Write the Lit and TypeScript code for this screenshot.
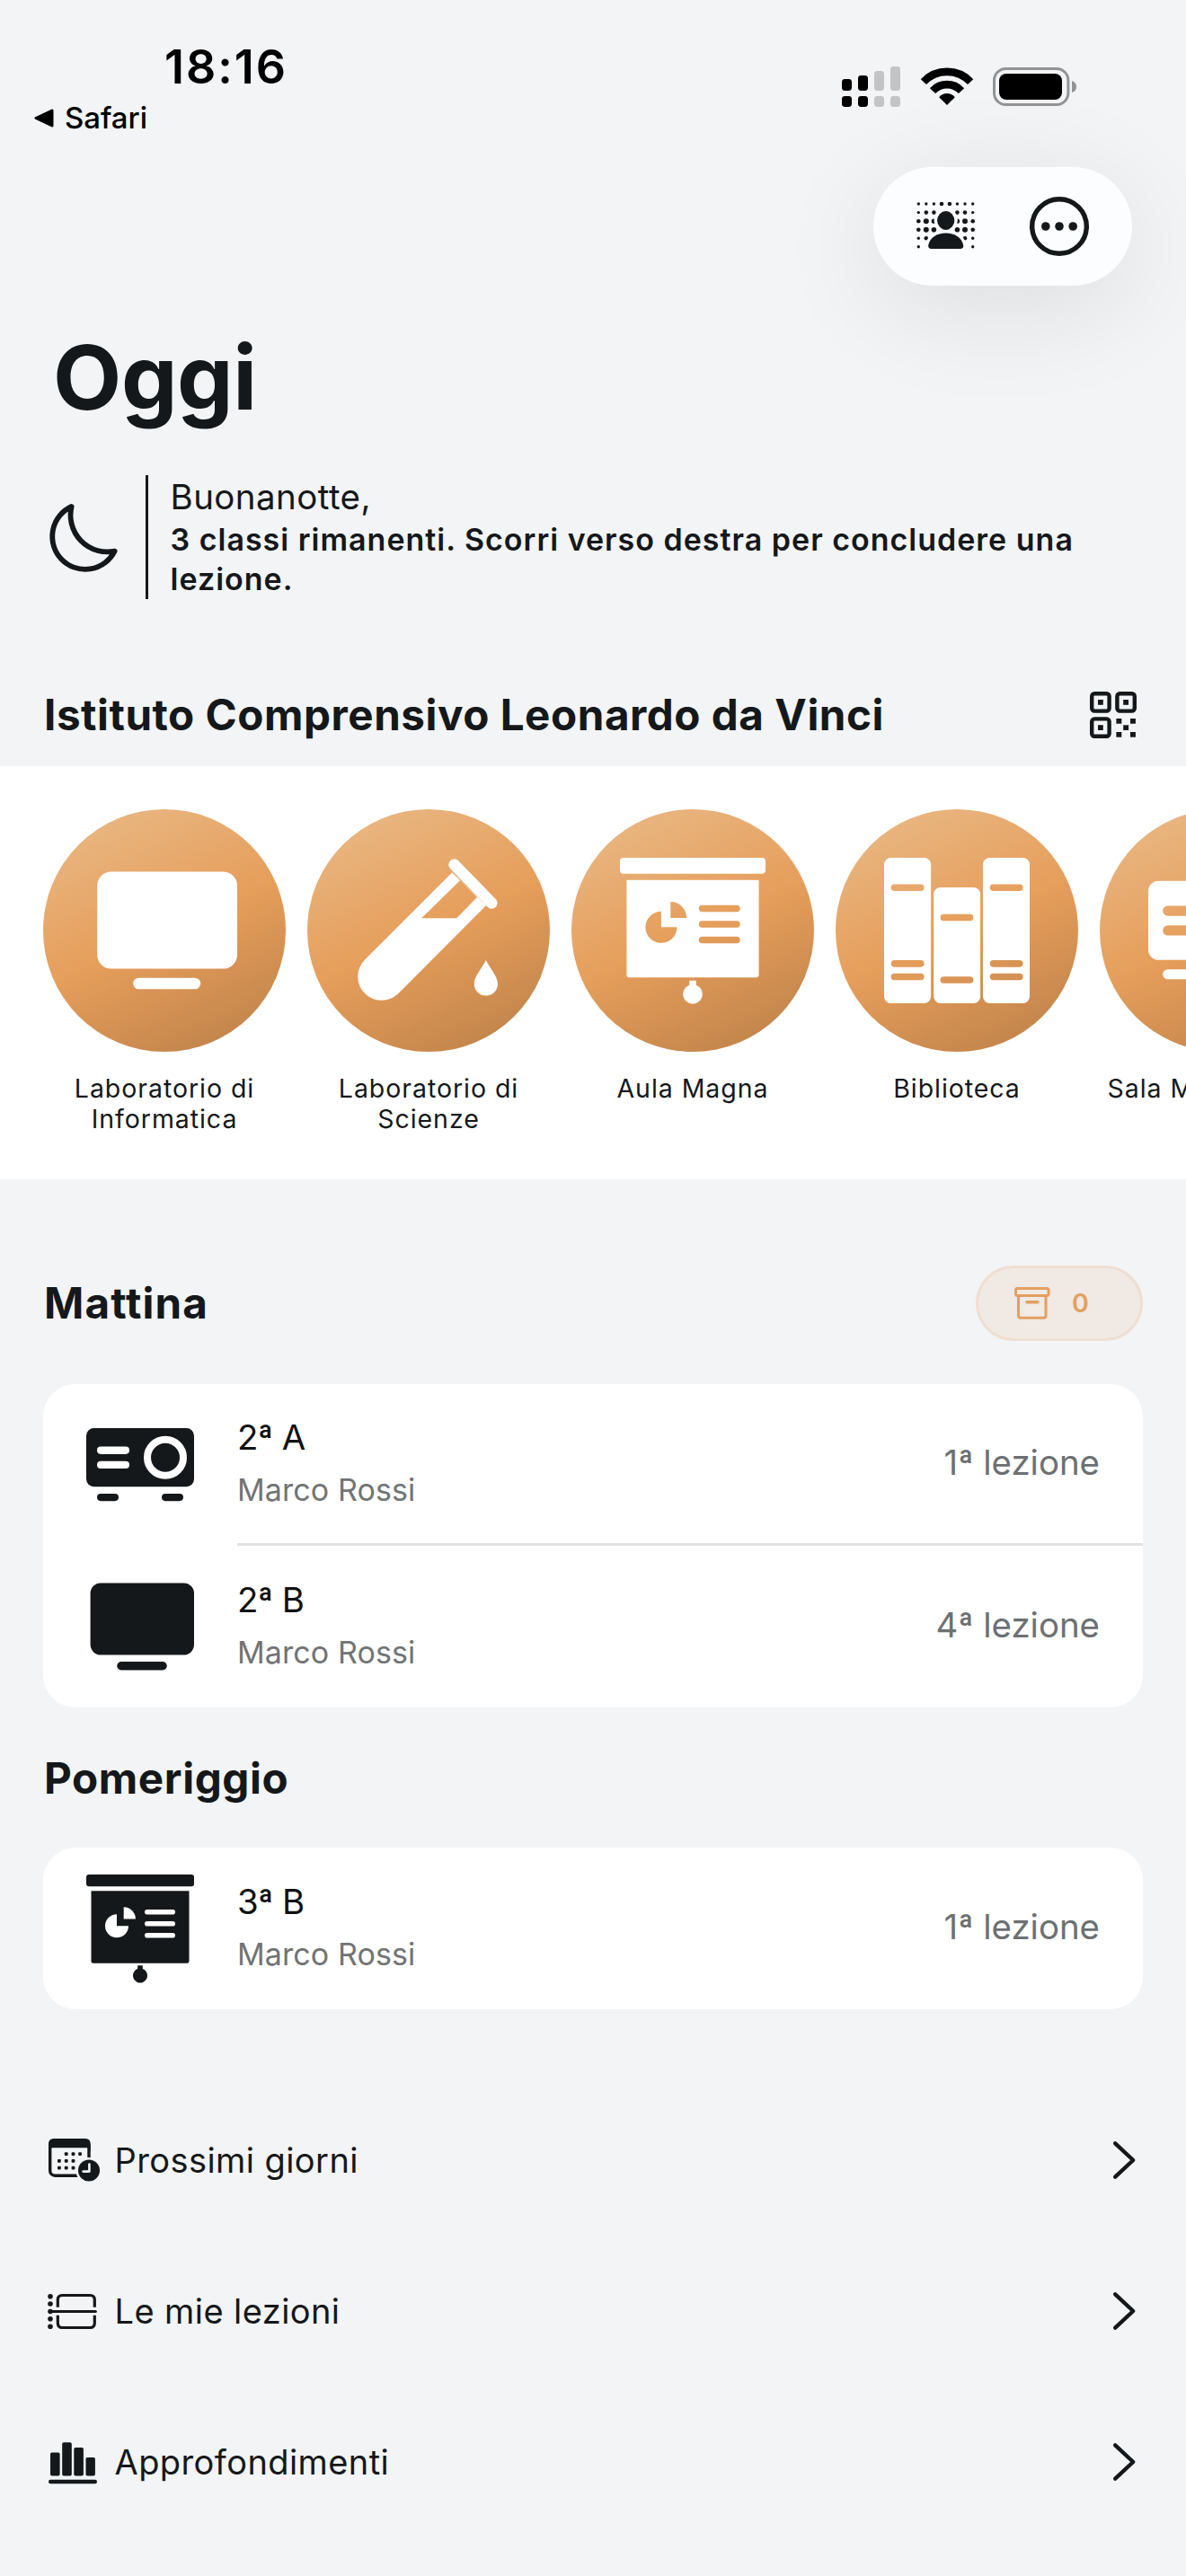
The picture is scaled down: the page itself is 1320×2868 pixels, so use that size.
import { LitElement, html, css, svg, nothing, type TemplateResult } from "lit";
import { customElement, property } from "lit/decorators.js";

type IconName = "monitor" | "tube" | "screen" | "books" | "projector";

/* Glyphs drawn on a 120-unit square; "cut" shapes are punched out with a mask. */
const ICONS: Record<IconName, { body: TemplateResult; cut?: TemplateResult }> = {
  monitor: {
    body: svg`<rect x="4.6" y="11.5" width="115.4" height="80" rx="11.5"/><rect x="34.2" y="99" width="55.6" height="9.4" rx="4.7"/>`,
  },
  projector: {
    body: svg`<rect x="0" y="19" width="120" height="65.3" rx="8.5"/><rect x="12" y="92" width="24" height="8.2" rx="4.1"/><rect x="84" y="92" width="24" height="8.2" rx="4.1"/>`,
    cut: svg`<rect x="12" y="39.6" width="36" height="8.3" rx="4.1"/><rect x="12" y="55.8" width="36" height="8.3" rx="4.1"/><circle cx="88" cy="51.7" r="20" fill="none" stroke="#000" stroke-width="8"/>`,
  },
  screen: {
    body: svg`<rect x="0" y="0" width="120" height="13.2" rx="3"/><path d="M5.5 18.3H114.5V96.5Q114.5 98.7 112.3 98.7H7.7Q5.5 98.7 5.5 96.5Z"/><path d="M57.2 101.3H62.8V105A8 8 0 1 1 57.2 105Z"/>`,
    cut: svg`<path d="M34 44.3A13 13 0 1 0 47 57.3H34Z"/><path d="M41.7 36.3A13.2 13.2 0 0 1 54.9 49.6H41.7Z"/><rect x="65" y="39" width="34" height="5.6" rx="2.8"/><rect x="65" y="52" width="34" height="5.6" rx="2.8"/><rect x="65" y="65" width="34" height="5.6" rx="2.8"/>`,
  },
  books: {
    body: svg`<rect x="0" y="0" width="38.6" height="120" rx="5.5"/><rect x="40.9" y="24.5" width="38.4" height="95.5" rx="5.5"/><rect x="81.5" y="0" width="38.5" height="120" rx="5.5"/>`,
    cut: svg`${[[5.7, 21.8], [5.7, 84.5], [5.7, 95.4], [46.3, 46.4], [46.3, 97.9], [87.2, 21.8], [87.2, 84.5], [87.2, 95.4]].map(
      ([x, y]) => svg`<rect x=${x} y=${y} width="27.3" height="5.6" rx="2.8"/>`
    )}`,
  },
  tube: {
    body: svg`<path d="M6.9 84.7L79.4 12.2L107.5 39.3L34.6 112.4A19.6 19.6 0 0 1 6.9 84.7Z"/><path d="M81.2 5.7L112 37.3" stroke="#fff" stroke-width="9.4" stroke-linecap="round"/><path d="M107.3 84.5C110.2 91 117 97.5 117 104A9.7 9.7 0 0 1 97.6 104C97.6 97.5 104.4 91 107.3 84.5Z"/>`,
    cut: svg`<path d="M86.1 18.5L100 32.6L83 49.9H54.1Z"/>`,
  },
};

@customElement("room-icon")
export class RoomIcon extends LitElement {
  static styles = css`
    :host { display: block; }
    .glyph { display: block; width: 100%; height: 100%; overflow: visible; }
  `;
  @property() name: IconName = "monitor";
  render() {
    const { body, cut } = ICONS[this.name];
    return html`<svg class="glyph" viewBox="0 0 120 120">
      <mask id="m" maskUnits="userSpaceOnUse" x="-5" y="-5" width="130" height="130">
        <g fill="#fff">${body}</g>
        ${cut ? svg`<g fill="#000">${cut}</g>` : nothing}
      </mask>
      <rect x="-5" y="-5" width="130" height="130" fill="currentColor" mask="url(#m)" />
    </svg>`;
  }
}

const ROOMS: { icon: IconName; label: string }[] = [
  { icon: "monitor", label: "Laboratorio di Informatica" },
  { icon: "tube", label: "Laboratorio di Scienze" },
  { icon: "screen", label: "Aula Magna" },
  { icon: "books", label: "Biblioteca" },
  { icon: "projector", label: "Sala Multimediale" },
];

interface Lesson { icon: IconName; name: string; teacher: string; slot: string }
const MORNING: Lesson[] = [
  { icon: "projector", name: "2ª A", teacher: "Marco Rossi", slot: "1ª lezione" },
  { icon: "monitor", name: "2ª B", teacher: "Marco Rossi", slot: "4ª lezione" },
];
const AFTERNOON: Lesson[] = [
  { icon: "screen", name: "3ª B", teacher: "Marco Rossi", slot: "1ª lezione" },
];

/* x, y, radius of the halftone dots behind the portrait */
const DOTS: [number, number, number][] = (() => {
  const cols = [2.3, 10.8, 19.4, 28, 36.9, 45.4, 54, 62.7];
  const rows = [2, 11.6, 21.2, 30.8, 40.3, 49.8];
  const radii = [
    [1.7, 1.7, 1.7, 2.3, 2.3, 1.7, 1.7, 1.7],
    [1.7, 2.3, 2.3, 0, 0, 2.3, 2.3, 1.7],
    [2.3, 3, 2.7, 0, 0, 2.7, 3, 2.3],
    [2.3, 3, 2.8, 0, 0, 2.8, 3, 2.3],
    [1.7, 2.3, 0, 0, 0, 0, 2.3, 1.7],
    [1.7, 0, 0, 0, 0, 0, 0, 1.7],
  ];
  const out: [number, number, number][] = [];
  radii.forEach((line, r) => line.forEach((v, c) => v && out.push([cols[c], rows[r], v])));
  return out;
})();

const faceIcon = html`<svg class="face" viewBox="0 0 65 54">
  <g fill="currentColor">${DOTS.map(([x, y, r]) => svg`<circle cx=${x} cy=${y} r=${r} />`)}</g>
  <ellipse cx="32.7" cy="20.5" rx="13" ry="14" fill="#fcfdfe" />
  <path d="M9.6 54C8 40 20 30.8 32.7 30.8S57 40 55.8 54Z" fill="#fcfdfe" />
  <ellipse cx="32.7" cy="20.5" rx="9.6" ry="10.4" fill="currentColor" />
  <path d="M16.6 52Q13 52 13.2 48.2C14.5 39.5 23 34.4 32.7 34.4S50.8 39.5 52.2 48.2Q52.4 52 48.8 52Z" fill="currentColor" />
</svg>`;

const moreIcon = html`<svg class="more" viewBox="0 0 66 66">
  <circle cx="33" cy="33" r="30.3" fill="none" stroke="currentColor" stroke-width="5.4" />
  <g fill="currentColor"><circle cx="17.8" cy="33" r="4.8" /><circle cx="33" cy="33" r="4.8" /><circle cx="48.2" cy="33" r="4.8" /></g>
</svg>`;

const signalIcon = html`<svg class="signal" viewBox="0 0 66 46">
  <g fill="#000"><rect x="0" y="14" width="11" height="13" rx="3.4" /><rect x="18" y="10" width="11" height="17" rx="3.4" /><rect x="0" y="33" width="11" height="12" rx="3.4" /><rect x="18" y="33" width="11" height="12" rx="3.4" /></g>
  <g fill="#c3c4c6"><rect x="36" y="5" width="11" height="22" rx="3.4" /><rect x="54" y="0" width="11" height="27" rx="3.4" /><rect x="36" y="33" width="11" height="12" rx="3.4" /><rect x="54" y="33" width="11" height="12" rx="3.4" /></g>
</svg>`;

const wifiIcon = html`<svg class="wifi" viewBox="0 0 58 42">
  <g fill="none" stroke="#000" stroke-width="8.6"><path d="M2.9 16.1A36 36 0 0 1 55.1 16.1" /><path d="M13 26.1A21.8 21.8 0 0 1 45 26.1" /></g>
  <path d="M20.2 33.2Q24 29 29 29T37.8 33.2L29 42Z" fill="#000" />
</svg>`;

const batteryIcon = html`<svg class="battery" viewBox="0 0 94 43">
  <rect x="1.5" y="1.5" width="82.4" height="40" rx="13" fill="none" stroke="#939396" stroke-width="3" />
  <rect x="7" y="7" width="70" height="29" rx="8" fill="#000" />
  <path d="M88 15Q93 16.5 93 21.5T88 28Z" fill="#939396" />
</svg>`;

const moonIcon = html`<svg class="moon" viewBox="0 0 77 77">
  <path d="M25.6 4A36.600 36.600 0 1 0 73.600 53.600A41 41 0 0 1 25.600 4Z" fill="none" stroke="currentColor" stroke-width="5.800" stroke-linejoin="round" />
</svg>`;

const qrIcon = html`<svg class="qr" viewBox="0 0 52 52">
  <g fill="none" stroke="currentColor" stroke-width="4.4"><rect x="2.2" y="2.2" width="19.4" height="19.4" rx="3" /><rect x="30.4" y="2.2" width="19.4" height="19.4" rx="3" /><rect x="2.2" y="30.4" width="19.4" height="19.4" rx="3" /></g>
  <g fill="currentColor"><rect x="9" y="9" width="5.8" height="5.8" /><rect x="37.2" y="9" width="5.8" height="5.8" /><rect x="9" y="37.2" width="5.8" height="5.8" /><rect x="29.4" y="30" width="5.9" height="5.7" /><rect x="45" y="30" width="5.9" height="5.7" /><rect x="37.2" y="37.3" width="5.9" height="5.7" /><rect x="29.4" y="45" width="5.9" height="5.7" /><rect x="45" y="45" width="5.9" height="5.7" /></g>
</svg>`;

const archiveIcon = html`<svg class="archive" viewBox="0 0 40 36">
  <g fill="none" stroke="currentColor" stroke-width="3" stroke-linejoin="round"><rect x="1.5" y="1.5" width="36.5" height="8" rx="2" /><path d="M4.5 9.5V31.5Q4.5 34.3 7.3 34.3H32.2Q35 34.3 35 31.5V9.5" /></g>
  <path d="M14 16.8H26" stroke="currentColor" stroke-width="3.4" stroke-linecap="round" />
</svg>`;

const calendarIcon = html`<svg class="entry-icon" viewBox="0 0 60 60">
  <rect x="1.7" y="7.7" width="43.3" height="39.5" rx="5.5" fill="none" stroke="currentColor" stroke-width="3.4" />
  <path d="M0 20V12Q0 6 6 6H40.7Q46.7 6 46.7 12V20L43 16.3H3.7Z" fill="currentColor" />
  <g fill="currentColor">${[[17.8, 21.2], [25.6, 21.2], [33.2, 21.2], [10, 29], [17.8, 29], [25.6, 29], [10, 36.8], [17.8, 36.8], [25.6, 36.8]].map(
    ([x, y]) => svg`<rect x=${x} y=${y} width="3.8" height="3.8" rx="1" />`
  )}</g>
  <circle cx="45" cy="41.6" r="14.6" fill="#f2f4f6" />
  <circle cx="45" cy="41.6" r="12" fill="currentColor" />
  <path d="M45.4 34.500V42.600H38.600" fill="none" stroke="#f2f4f6" stroke-width="2.6" stroke-linecap="round" stroke-linejoin="round" />
</svg>`;

const timelineIcon = html`<svg class="entry-icon" viewBox="0 0 60 60">
  <g fill="currentColor">${[13.7, 22, 30.5, 38.8, 47.2].map((y) => svg`<circle cx="2" cy=${y} r="2.8" />`)}</g>
  <g fill="none" stroke="currentColor" stroke-width="3.2">
    <path d="M2 30.5H52.3" stroke-linecap="round" />
    <path d="M10.3 25.8V17.5Q10.3 12.5 15.3 12.5H46.3Q51.3 12.5 51.3 17.5V25.8" />
    <path d="M10.3 34.8V43.5Q10.3 48.5 15.3 48.5H46.3Q51.3 48.5 51.3 43.5V34.8" />
  </g>
</svg>`;

const chartIcon = html`<svg class="entry-icon" viewBox="0 0 60 60">
  <g fill="currentColor"><rect x="2" y="19.6" width="10.6" height="26" rx="1.8" /><rect x="15.2" y="8.3" width="10.6" height="37.3" rx="1.8" /><rect x="28.3" y="14" width="10.6" height="31.6" rx="1.8" /><rect x="41.5" y="25" width="10.4" height="20.6" rx="1.8" /><rect x="0" y="49.8" width="54" height="4.4" rx="2.2" /></g>
</svg>`;

const ENTRIES = [
  { icon: calendarIcon, label: "Prossimi giorni" },
  { icon: timelineIcon, label: "Le mie lezioni" },
  { icon: chartIcon, label: "Approfondimenti" },
];

@customElement("app-root")
export class AppRoot extends LitElement {
  static styles = css`
    :host {
      display: flex; flex-direction: column; box-sizing: border-box;
      width: 1320px; height: 2868px; overflow: hidden;
      background: #f2f4f6; color: #15181a;
      font-family: Inter, "Liberation Sans", sans-serif; font-weight: 400;
    }
    svg { display: block; flex: none; overflow: visible; }
    .status { display: flex; justify-content: space-between; height: 186px; box-sizing: border-box; color: #000; }
    .clock-side { padding: 45px 0 0 38px; }
    .clock { margin-left: 145px; font-size: 52px; line-height: 60px; font-weight: 600; letter-spacing: 2px; }
    .back { display: flex; align-items: center; gap: 12px; margin-top: 6px; font-size: 33px; line-height: 40px; font-weight: 500; letter-spacing: -0.05px; }
    .back-arrow { width: 22px; height: 21px; }
    .indicators { display: flex; gap: 22px; padding: 74px 121px 0 0; }
    .signal { width: 66px; height: 46px; }
    .wifi { width: 58px; height: 42px; margin-top: 1px; }
    .battery { width: 94px; height: 43px; margin-top: 1px; }
    .toolbar { display: flex; justify-content: flex-end; padding-right: 60px; }
    .pill {
      display: flex; align-items: center; justify-content: space-between; box-sizing: border-box;
      width: 288px; height: 132px; padding: 0 48px; border-radius: 66px; background: #fcfdfe;
      box-shadow: 0 24px 120px rgba(20, 10, 10, 0.095);
    }
    .face { width: 65px; height: 54px; }
    .more { width: 66px; height: 66px; }
    .title { margin: 42px 0 0 59px; font-size: 99px; line-height: 120px; font-weight: 700; letter-spacing: -0.4px; }
    .greeting { display: flex; align-items: center; margin: 49px 0 0 54px; height: 138px; }
    .moon { width: 77px; height: 77px; margin-right: 31px; }
    .rule { width: 3px; height: 138px; background: #15181a; }
    .message { width: 1060px; margin-left: 24.5px; }
    .hello { font-size: 38.5px; line-height: 48px; letter-spacing: 0.44px; margin-bottom: 2px; }
    .summary { font-size: 34px; line-height: 44px; font-weight: 600; letter-spacing: 1px; }
    .heading { font-size: 47.6px; line-height: 60px; font-weight: 700; letter-spacing: 0.6px; margin: 0; }
    .school { display: flex; justify-content: space-between; align-items: center; padding: 0 55px 0 49px; margin-top: 99px; height: 60px; }
    .school .heading { letter-spacing: 0.53px; }
    .qr { width: 52px; height: 52px; }
    .rooms { display: flex; gap: 24px; box-sizing: border-box; height: 460px; margin-top: 27px; padding: 48px 0 0 48px; background: #fff; overflow: hidden; }
    .room { flex: none; width: 270px; text-align: center; }
    .disc {
      display: flex; align-items: center; justify-content: center; width: 270px; height: 270px; border-radius: 50%; color: #fff;
      background: linear-gradient(155deg, #e9b986 4%, #e69e5b 50%, #c0834a 93%);
    }
    .disc room-icon { width: 162px; height: 162px; }
    .room-label { width: 256px; margin: 24px auto 0; font-size: 28.5px; line-height: 34px; letter-spacing: 0.95px; }
    .section { display: flex; justify-content: space-between; align-items: center; padding: 0 48px 0 49px; }
    .morning { height: 84px; margin-top: 96px; }
    .morning .heading { letter-spacing: 1.1px; }
    .badge {
      display: flex; align-items: center; box-sizing: border-box; width: 186px; height: 84px; padding-left: 40px;
      border: 3px solid #efdfd1; border-radius: 42px; background: #f0e9e4; color: #e2a05f;
      font-size: 28.5px; line-height: 36px; font-weight: 600;
    }
    .archive { width: 40px; height: 36px; margin-right: 24px; }
    .card { margin: 48px 48px 0; border-radius: 36px; background: #fff; overflow: hidden; }
    .lesson { display: flex; align-items: center; height: 180px; padding-left: 48px; }
    .lesson room-icon { width: 120px; height: 120px; flex: none; }
    .lesson-body { display: flex; flex: 1; align-items: center; justify-content: space-between; box-sizing: border-box; height: 180px; margin-left: 48px; padding: 0 48px 4px 0; }
    .divided .lesson-body { padding-bottom: 6px; box-shadow: inset 0 -3px 0 #e2e2e3; }
    .lesson-name { font-size: 38.4px; line-height: 48px; letter-spacing: -0.6px; color: #101213; }
    .teacher { margin-top: 13px; font-size: 34px; line-height: 44px; letter-spacing: 0.1px; color: #717475; }
    .slot { font-size: 38.4px; line-height: 48px; color: #6c7072; }
    .afternoon { margin-top: 48.5px; height: 60px; }
    .card.last { margin-top: 47.5px; }
    .entries { margin-top: 83.5px; }
    .entry { display: flex; align-items: center; height: 168px; padding: 0 57px 0 54px; }
    .entry-icon { width: 60px; height: 60px; }
    .entry-label { flex: 1; margin-left: 13.5px; font-size: 38px; line-height: 48px; letter-spacing: 0.42px; }
    .chevron { width: 24px; height: 42px; }
  `;

  private lesson(l: Lesson, divided: boolean) {
    return html`<div class="lesson ${divided ? "divided" : ""}">
      <room-icon name=${l.icon}></room-icon>
      <div class="lesson-body">
        <div>
          <div class="lesson-name">${l.name}</div>
          <div class="teacher">${l.teacher}</div>
        </div>
        <div class="slot">${l.slot}</div>
      </div>
    </div>`;
  }

  render() {
    return html`
      <header class="status">
        <div class="clock-side">
          <div class="clock">18:16</div>
          <div class="back">
            <svg class="back-arrow" viewBox="0 0 22 21"><path d="M2 10.5L20 2V19Z" fill="#000" stroke="#000" stroke-width="3" stroke-linejoin="round" /></svg>
            <span>Safari</span>
          </div>
        </div>
        <div class="indicators">${signalIcon}${wifiIcon}${batteryIcon}</div>
      </header>
      <div class="toolbar"><div class="pill">${faceIcon}${moreIcon}</div></div>
      <div class="title">Oggi</div>
      <section class="greeting">
        ${moonIcon}
        <div class="rule"></div>
        <div class="message">
          <div class="hello">Buonanotte,</div>
          <div class="summary">3 classi rimanenti. Scorri verso destra per concludere una lezione.</div>
        </div>
      </section>
      <div class="school">
        <h2 class="heading">Istituto Comprensivo Leonardo da Vinci</h2>
        ${qrIcon}
      </div>
      <div class="rooms">
        ${ROOMS.map(
          (r) => html`<div class="room">
            <div class="disc"><room-icon name=${r.icon}></room-icon></div>
            <div class="room-label">${r.label}</div>
          </div>`
        )}
      </div>
      <div class="section morning">
        <h2 class="heading">Mattina</h2>
        <div class="badge">${archiveIcon}<span>0</span></div>
      </div>
      <div class="card">${MORNING.map((l, i) => this.lesson(l, i < MORNING.length - 1))}</div>
      <div class="section afternoon"><h2 class="heading">Pomeriggio</h2></div>
      <div class="card last">${AFTERNOON.map((l) => this.lesson(l, false))}</div>
      <nav class="entries">
        ${ENTRIES.map(
          (e) => html`<div class="entry">
            ${e.icon}
            <span class="entry-label">${e.label}</span>
            <svg class="chevron" viewBox="0 0 24 42"><path d="M2.2 2.3L22.2 21L2.2 39.7" fill="none" stroke="currentColor" stroke-width="4.4" stroke-linecap="round" stroke-linejoin="round" /></svg>
          </div>`
        )}
      </nav>
    `;
  }
}
